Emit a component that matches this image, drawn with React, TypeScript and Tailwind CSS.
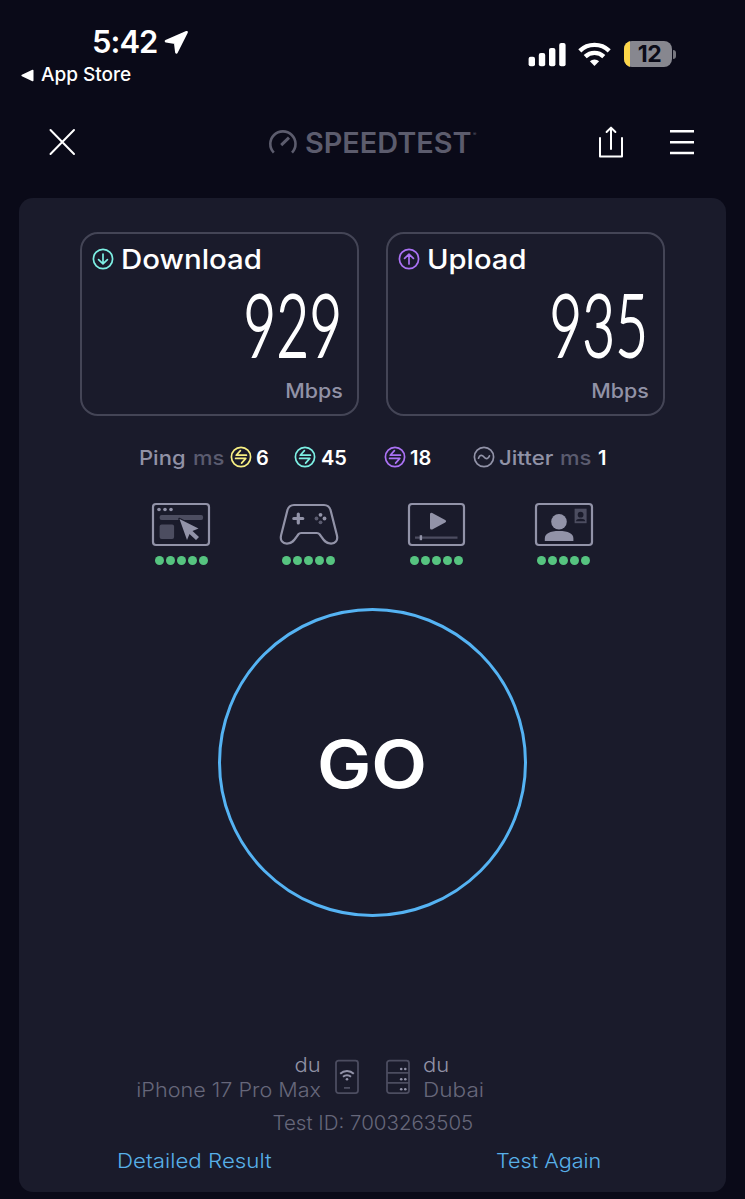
import type { ReactNode } from "react";

const PingIcon = ({ color }: { color: string }) => (
  <svg className="mb-[2px] shrink-0" width="22" height="22" viewBox="0 0 22 22" fill="none" stroke={color} strokeWidth="1.7" strokeLinecap="round" strokeLinejoin="round">
    <circle cx="11" cy="11" r="9.6" />
    <path d="M10.4 4.6 6.2 9.2h10.2M5.6 12.4h10.2l-4.2 4.7" />
  </svg>
);

const ArrowIcon = ({ color, up }: { color: string; up?: boolean }) => (
  <svg className="mb-[2px] shrink-0" width="22" height="22" viewBox="0 0 22 22" fill="none" stroke={color} strokeWidth="1.7" strokeLinecap="round" strokeLinejoin="round">
    <circle cx="11" cy="11" r="9.6" />
    {up ? <path d="M11 16V6.6M6.6 10.4 11 6.2l4.4 4.2" /> : <path d="M11 6v9.4M6.6 11.6 11 15.8l4.4-4.2" />}
  </svg>
);

function ResultBox({ title, value, icon, titleClass }: { title: string; value: string; icon: ReactNode; titleClass: string }) {
  return (
    <div className="flex h-[184px] w-[279px] flex-col rounded-[18px] border-2 border-[#444556] pt-[8px] pr-[14px] pl-[10px]">
      <div className="flex h-[36px] items-center gap-[7px]">
        {icon}
        <span className={titleClass}>{title}</span>
      </div>
      <div className="mt-[6px] flex h-[80px] items-center justify-end">
        <span className="origin-right scale-x-[0.65] font-[Lato] text-[86px] leading-[80px] font-light tracking-[1px] [-webkit-text-stroke:2px_white]">
          {value}
        </span>
      </div>
      <div className="mt-[13px] flex justify-end text-[20px] leading-[28px] font-medium text-[#9192a6]">
        <span className="origin-right scale-x-[1.07]">Mbps</span>
      </div>
    </div>
  );
}

function Activity({ children }: { children: ReactNode }) {
  return (
    <div className="flex w-[60px] flex-col items-center">
      <svg width="60" height="46" viewBox="0 0 60 46" fill="none" stroke="#9293a8" strokeWidth="2.2">
        {children}
      </svg>
      <div className="mt-[7.5px] flex gap-[2px]">
        {[0, 1, 2, 3, 4].map((i) => (
          <span key={i} className="size-[9px] rounded-full bg-[#56c480]" />
        ))}
      </div>
    </div>
  );
}

function StatusBar() {
  return (
    <div className="flex h-[100px] justify-between">
      <div className="pt-[25px] pl-[21px]">
        <div className="flex h-[34px] items-center pl-[71px]">
          <span className="text-[31px] leading-[34px] font-semibold tracking-[-1px]">5:42</span>
          <svg className="ml-[7px]" width="25" height="25" viewBox="0 0 25 25" fill="#fff" stroke="#fff" strokeWidth="2.6" strokeLinejoin="round">
            <path d="M22.6 2.2 2 11.200l9.200 1.400 1.200 9.800Z" />
          </svg>
        </div>
        <div className="mt-[4px] flex h-[24px] items-center gap-[7px]">
          <svg width="13" height="13" viewBox="0 0 13 13" fill="#fff">
            <path d="M11.400.800.900 5.800c-.7.400-.7 1 0 1.400l10.500 5c.7.300 1.100 0 1.100-.7v-10c0-.7-.4-1-1.100-.7Z" />
          </svg>
          <span className="text-[19px] leading-[24px] font-medium">App Store</span>
        </div>
      </div>
      <div className="flex pt-[41px] pr-[69px]">
        <svg width="38" height="26" viewBox="0 0 38 26" fill="#fff">
          <rect x="0.6" y="15.8" width="6.4" height="9.4" rx="2" />
          <rect x="10.8" y="12" width="6.4" height="13.2" rx="2" />
          <rect x="21" y="7" width="6.4" height="18.2" rx="2" />
          <rect x="31.2" y="2" width="6.4" height="23.2" rx="2" />
        </svg>
        <svg className="ml-[12px]" width="33" height="26" viewBox="0 0 33 26" fill="none" stroke="#fff" strokeWidth="4.4">
          <path d="M1.8 9.8a21.3 21.3 0 0 1 29.4 0" />
          <path d="M7.2 15.6a13.6 13.6 0 0 1 18.6 0" />
          <path d="m16.5 25 4.6-4.8a6.8 6.8 0 0 0-9.2 0Z" fill="#fff" stroke="none" />
        </svg>
        <div className="ml-[13px] flex h-[26px] w-[48px] shrink-0 items-center overflow-hidden rounded-[8px] bg-[#87878f]">
          <span className="h-full w-[6px] bg-[#fdd649]" />
          <span className="flex-1 pr-[3px] text-center text-[23px] leading-[26px] font-bold tracking-[-0.4px] text-[#0b0b18]">12</span>
        </div>
        <span className="mt-[9px] ml-[1px] h-[9px] w-[3px] shrink-0 rounded-r-full bg-[#77777f]" />
      </div>
    </div>
  );
}

function Header() {
  return (
    <header className="flex h-[98px] pl-[49px]">
      <svg className="mt-[28px]" width="27" height="28" viewBox="0 0 27 28" stroke="#fff" strokeWidth="2" strokeLinecap="round">
        <path d="M1.500 2 25 26M25 2 1.500 26" />
      </svg>
      <svg className="mt-[29px] ml-[192px]" width="30" height="26" viewBox="0 0 30 26" fill="none" stroke="#5c5c6d" strokeWidth="2.6">
        <path d="M5.8 23.7A12.6 12.6 0 1 1 24 23.7" />
        <path d="M13.2 16.2 21 8.7" strokeWidth="3" />
      </svg>
      <span className="mt-[26px] ml-[7px] w-[168px] text-[28px] leading-[34px] font-semibold whitespace-nowrap text-[#5c5c6d]">
        <span className="inline-block origin-left scale-x-[1.03]">SPEEDTEST</span>
      </span>
      <span className="mt-[31px] w-[4px] text-[5px] leading-[6px] text-[#5c5c6d]">®</span>
      <svg className="mt-[26px] ml-[121px]" width="26" height="33" viewBox="0 0 26 33" fill="none" stroke="#fff" strokeWidth="2" strokeLinecap="round" strokeLinejoin="round">
        <path d="M2 12v18.6h22V12M13 23V2M8.6 6 13 1.6 17.4 6" />
      </svg>
      <svg className="mt-[29px] ml-[45px]" width="26" height="27" viewBox="0 0 26 27" stroke="#fff" strokeWidth="2.5">
        <path d="M1 2.3h24M1 13.2h24M1 23.9h24" />
      </svg>
    </header>
  );
}

export default function App() {
  return (
    <div className="h-[1199px] w-[745px] overflow-hidden bg-[#0a0a18] font-[Inter,sans-serif] text-white">
      <StatusBar />
      <Header />

      <main className="mx-[19px] h-[994px] w-[707px] rounded-[14px] bg-[#1a1b2b] pt-[34px]">
        <div className="flex gap-[27px] pl-[61px]">
          <ResultBox
            title="Download"
            value="929"
            icon={<ArrowIcon color="#7df0e4" />}
            titleClass="origin-left scale-x-[1.09] text-[27px] font-[550]"
          />
          <ResultBox
            title="Upload"
            value="935"
            icon={<ArrowIcon color="#ab72f5" up />}
            titleClass="origin-left scale-x-[1.08] text-[27px] font-[550]"
          />
        </div>

        {/* Latency row */}
        <div className="mt-[27px] flex h-[30px] items-center pl-[120px] text-[20px] font-semibold">
          <span className="w-[54px] font-medium text-[#9192a6]">
            <span className="inline-block origin-left scale-x-[1.1]">Ping</span>
          </span>
          <span className="w-[37px] font-medium text-[#5a5b6f]">
            <span className="inline-block origin-left scale-x-[1.1]">ms</span>
          </span>
          <PingIcon color="#f7ef83" />
          <span className="ml-[4px] w-[38px]">6</span>
          <PingIcon color="#7df0e4" />
          <span className="ml-[5px] w-[63px]">45</span>
          <PingIcon color="#ab72f5" />
          <span className="ml-[4px] w-[63px]">18</span>
          <svg className="mb-[2px]" width="22" height="22" viewBox="0 0 22 22" fill="none" stroke="#9293a8" strokeWidth="1.7" strokeLinecap="round">
            <circle cx="11" cy="11" r="9.6" />
            <path d="M5.5 12.2c1.2-3.6 3.6-3.4 5.5-1.2s4.3 2.4 5.5-1.2" />
          </svg>
          <span className="ml-[4px] w-[61px] font-medium text-[#9192a6]">
            <span className="inline-block origin-left scale-x-[1.11]">Jitter</span>
          </span>
          <span className="w-[38px] font-medium text-[#5a5b6f]">
            <span className="inline-block origin-left scale-x-[1.1]">ms</span>
          </span>
          <span>1</span>
        </div>

        <div className="mt-[29px] flex justify-between px-[132px]">
          {/* Browsing */}
          <Activity>
            <rect x="2" y="2" width="56" height="41" rx="3" />
            <g fill="#9293a8" stroke="none">
              <circle cx="8" cy="7.5" r="1.8" />
              <circle cx="14" cy="7.5" r="1.8" />
              <circle cx="20" cy="7.5" r="1.8" />
              <rect x="8.6" y="13" width="43.5" height="5" rx="2" fill="#4c4d60" />
              <rect x="8.6" y="22.6" width="14.5" height="14.5" rx="2" fill="#4c4d60" />
              <path d="m28.500 17 19 9.500-6 2.500 6.500 6-3 3-6.500-6-2.500 6Z" stroke="#1a1b2b" strokeWidth="2.500" paintOrder="stroke" strokeLinejoin="round" />
            </g>
          </Activity>
          {/* Gaming */}
          <Activity>
            <path d="M15 3h30c3.500 0 5.700 2 6.600 5.200l6.200 24.500c1.600 6-1.700 9-5.700 9-6 0-8.500-5.200-11.300-9.200-.9-1.200-1.700-1.500-3-1.500H22.200c-1.300 0-2.100.3-3 1.500-2.800 4-5.300 9.200-11.300 9.200-4 0-7.300-3-5.700-9L8.400 8.200C9.300 5 11.500 3 15 3Z" />
            <path d="M19.300 12v9M14.800 16.500h9" strokeWidth="3.200" strokeLinecap="round" />
            <g fill="#9293a8" stroke="none">
              <circle cx="41.500" cy="12.800" r="1.900" />
              <circle cx="45.500" cy="16.500" r="1.900" />
              <circle cx="37.500" cy="16.500" r="1.900" fill="#5a5b6f" />
              <circle cx="41.500" cy="20.300" r="1.900" fill="#5a5b6f" />
            </g>
          </Activity>
          {/* Streaming */}
          <Activity>
            <rect x="3" y="2" width="55" height="41" rx="3" />
            <path d="M25.500 12.300v13.800L38.500 19.200Z" fill="#9293a8" strokeLinejoin="round" strokeWidth="3" />
            <path d="M9 35.600h42.500" stroke="#4c4d60" strokeWidth="2.400" />
            <path d="M14.900 33.200v5" strokeWidth="2.400" />
          </Activity>
          {/* Video call */}
          <Activity>
            <rect x="2" y="2" width="56" height="41" rx="3" />
            <g fill="#9293a8" stroke="none">
              <circle cx="25" cy="19.700" r="7.800" />
              <path d="M10.800 39v-2.500c0-5 5-7.500 14.300-7.500s14.300 2.500 14.300 7.500V39Z" />
              <rect x="40.600" y="6.700" width="12" height="14.500" fill="#4c4d60" />
              <circle cx="46.600" cy="12.700" r="2.900" fill="#1a1b2b" />
              <path d="M42 19.200c0-3.200 9.200-3.200 9.200 0Z" fill="#1a1b2b" />
            </g>
          </Activity>
        </div>

        <div className="mt-[43.5px] ml-[199px] flex size-[309px] items-center justify-center rounded-full border-[3px] border-[#55b3f3]">
          <span className="mt-[2px] scale-x-[1.1] text-[66px] leading-none font-semibold">GO</span>
        </div>

        <div className="mt-[136px] flex text-[20px] leading-[25px] text-[#66677a]">
          <div className="w-[302px] text-right font-light">
            <p className="text-[#9192a6]"><span className="inline-block origin-right scale-x-[1.1]">du</span></p>
            <p><span className="inline-block origin-right scale-x-[1.08]">iPhone 17 Pro Max</span></p>
          </div>
          <svg className="mt-[6px] ml-[14px]" width="25" height="36" viewBox="0 0 25 36" fill="none" stroke="#4c4d60" strokeWidth="1.8">
            <rect x="1" y="1.6" width="22" height="32.5" rx="2.5" />
            <g stroke="#9293a8" strokeWidth="1.9">
              <path d="M5.2 14.8a9.7 9.7 0 0 1 13.6 0M8 17.8a5.8 5.8 0 0 1 8 0" />
              <circle cx="12" cy="20.3" r="1.3" fill="#9293a8" stroke="none" />
            </g>
            <path d="M9 28.9h6" />
          </svg>
          <svg className="mt-[6px] ml-[26px]" width="25" height="36" viewBox="0 0 25 36" fill="none" stroke="#4c4d60" strokeWidth="1.8">
            <rect x="1" y="1.6" width="22" height="32.5" rx="2.5" />
            <path d="M1 13.8h22M1 23.8h22" />
            <g fill="#9293a8" stroke="none">
              <circle cx="15.2" cy="10" r="1.3" />
              <circle cx="19.3" cy="10" r="1.3" />
              <circle cx="15.2" cy="20.2" r="1.3" />
              <circle cx="19.3" cy="20.2" r="1.3" />
              <circle cx="15.2" cy="30.3" r="1.3" />
              <circle cx="19.3" cy="30.3" r="1.3" />
            </g>
          </svg>
          <div className="ml-[12px] font-light">
            <p className="text-[#9192a6]"><span className="inline-block origin-left scale-x-[1.1]">du</span></p>
            <p><span className="inline-block origin-left scale-x-[1.13]">Dubai</span></p>
          </div>
        </div>

        <p className="mt-[8px] text-center text-[20px] leading-[25px] font-light text-[#66677a]">
          <span className="inline-block scale-x-[1.025]">Test ID: 7003263505</span>
        </p>
        <div className="mt-[13px] flex text-[20px] leading-[25px] font-[350] text-[#58b0e8]">
          <a className="ml-[98px] w-[379px]"><span className="inline-block origin-left scale-x-[1.115]">Detailed Result</span></a>
          <a><span className="inline-block origin-left scale-x-[1.08]">Test Again</span></a>
        </div>
      </main>
    </div>
  );
}
